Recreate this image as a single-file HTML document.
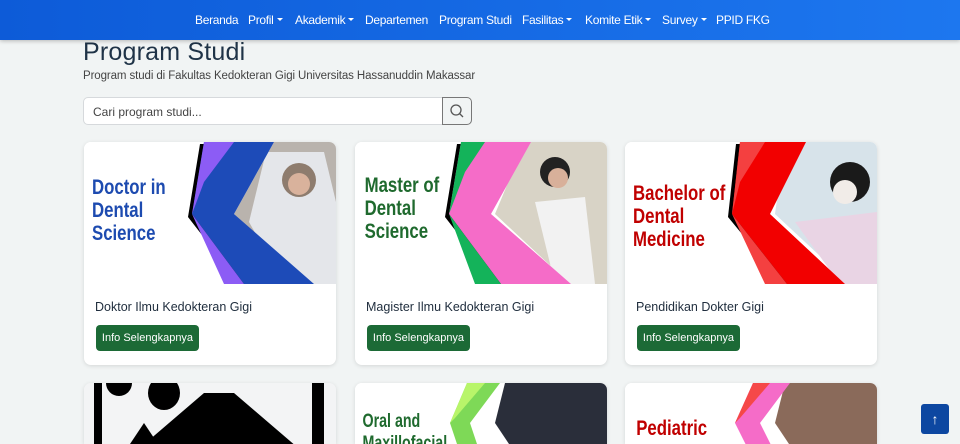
<!DOCTYPE html>
<html><head><meta charset="utf-8"><style>
*{box-sizing:border-box;margin:0;padding:0}
html{height:444px;overflow:hidden}
body{width:960px;height:444px;overflow:hidden;background:#f1f4f4;font-family:"Liberation Sans",sans-serif;position:relative}
.nav{position:absolute;top:0;left:0;width:960px;height:40px;background:linear-gradient(90deg,#0d5bd8,#1d77ef);box-shadow:0 1px 4px rgba(0,0,0,.25);z-index:2}
.nav span{position:absolute;top:13px;color:#fff;font-size:12px;letter-spacing:-.3px;white-space:nowrap}
.car{display:inline-block;width:0;height:0;border-left:3px solid transparent;border-right:3px solid transparent;border-top:3px solid #fff;vertical-align:3px;margin-left:3px}
h1{position:absolute;left:83px;top:38px;font-size:25px;font-weight:normal;color:#1f3347;letter-spacing:.2px}
.sub{position:absolute;left:83px;top:70px;font-size:11.5px;color:#444;letter-spacing:-.1px}
.search{position:absolute;left:83px;top:97px;width:360px;height:28px;background:#fff;border:1px solid #d6d9dc;border-radius:5px 0 0 5px;font-size:12px;color:#444;padding:7px 9px}
.sbtn{position:absolute;left:442px;top:97px;width:30px;height:28px;border:1px solid #777;border-radius:0 5px 5px 0}
.card{position:absolute;width:252px;height:223px;background:#fff;border-radius:7px;box-shadow:0 1px 4px rgba(0,0,0,.12);overflow:hidden}
.card.low{height:61px;border-radius:7px 7px 0 0}
.card svg{position:absolute;left:0;top:0}
.card .t{position:absolute;left:11px;top:158px;font-size:12.5px;color:#1f2d3d}
.card .b{position:absolute;left:12px;top:183px;width:103px;height:26px;background:#1c6a36;border-radius:4px;color:#fff;font-size:11px;text-align:center;line-height:26px}
.up{position:absolute;left:921px;top:404px;width:28px;height:30px;background:#0d47a1;border-radius:3px;color:#fff;text-align:center;font-size:14px;line-height:30px}
</style></head><body>
<div class="nav">
<span style="left:195px">Beranda</span>
<span style="left:248px">Profil<i class="car"></i></span>
<span style="left:295px">Akademik<i class="car"></i></span>
<span style="left:365px">Departemen</span>
<span style="left:439px">Program Studi</span>
<span style="left:522px">Fasilitas<i class="car"></i></span>
<span style="left:585px">Komite Etik<i class="car"></i></span>
<span style="left:662px">Survey<i class="car"></i></span>
<span style="left:716px">PPID FKG</span>
</div>
<h1>Program Studi</h1>
<div class="sub">Program studi di Fakultas Kedokteran Gigi Universitas Hassanuddin Makassar</div>
<div class="search">Cari program studi...</div>
<div class="sbtn"><svg width="28" height="26" viewBox="0 0 28 26"><circle cx="13" cy="12" r="5" fill="none" stroke="#555" stroke-width="1.3"/><line x1="16.5" y1="15.5" x2="20" y2="19" stroke="#555" stroke-width="1.3"/></svg></div>

<div class="card" style="left:84px;top:142px">
<svg width="252" height="142"><rect width="252" height="142" fill="#fff"/>
<polygon points="190,0 252,0 252,142 228,142 150,72" fill="#b9b3ad"/>
<polygon points="182,10 240,10 252,60 252,142 200,142 165,80" fill="#e4e6ea"/>
<circle cx="215" cy="38" r="17" fill="#8e7c6e"/><circle cx="215" cy="42" r="11" fill="#d9b29c"/>
<polygon points="116,2 186,2 146,75 226,142 156,142 104,75" fill="#000"/>
<polygon points="120,0 190,0 150,72 230,142 160,142 108,72" fill="#1d4bb8"/>
<polygon points="120,0 150,0 120,40 108,72 160,142 140,142 108,72" fill="#8c5cf5"/>
<g font-family="Liberation Sans" font-weight="bold" font-size="21" fill="#1d4bb0" transform="scale(.8,1)">
<text x="10" y="52">Doctor in</text><text x="10" y="75">Dental</text><text x="10" y="98">Science</text></g>
</svg>
<div class="t">Doktor Ilmu Kedokteran Gigi</div><div class="b">Info Selengkapnya</div></div>

<div class="card" style="left:355px;top:142px">
<svg width="252" height="142"><rect width="252" height="142" fill="#fff"/>
<polygon points="170,0 252,0 252,142 215,142 140,72" fill="#d8d3c6"/>
<circle cx="200" cy="30" r="15" fill="#222"/><circle cx="203" cy="36" r="10" fill="#d8b09a"/>
<polygon points="180,60 230,55 240,142 200,142" fill="#f2f2f2"/>
<polygon points="102,2 172,2 132,75 212,142 142,142 90,75" fill="#000"/>
<polygon points="106,0 176,0 136,72 216,142 146,142 94,72" fill="#f56cc8"/>
<polygon points="106,0 130,0 110,30 94,72 146,142 120,142 94,72" fill="#14b35a"/>
<g font-family="Liberation Sans" font-weight="bold" font-size="21" fill="#1f6a2e" transform="scale(.8,1)">
<text x="12" y="50">Master of</text><text x="12" y="73">Dental</text><text x="12" y="96">Science</text></g>
</svg>
<div class="t">Magister Ilmu Kedokteran Gigi</div><div class="b">Info Selengkapnya</div></div>

<div class="card" style="left:625px;top:142px">
<svg width="252" height="142"><rect width="252" height="142" fill="#fff"/>
<polygon points="160,0 252,0 252,142 225,142 150,72" fill="#d7e3ea"/>
<circle cx="225" cy="40" r="20" fill="#1a1a1a"/><circle cx="220" cy="50" r="12" fill="#f1ece8"/>
<polygon points="170,80 252,70 252,142 215,142" fill="#e9d4e4"/>
<polygon points="111,2 177,2 141,75 216,142 158,142 103,75" fill="#000"/>
<polygon points="115,0 181,0 145,72 220,142 162,142 107,72" fill="#f20000"/>
<polygon points="115,0 140,0 115,40 107,72 162,142 140,142 107,72" fill="#f44040"/>
<g font-family="Liberation Sans" font-weight="bold" font-size="21" fill="#c00000" transform="scale(.8,1)">
<text x="10" y="58">Bachelor of</text><text x="10" y="81">Dental</text><text x="10" y="104">Medicine</text></g>
</svg>
<div class="t">Pendidikan Dokter Gigi</div><div class="b">Info Selengkapnya</div></div>

<div class="card low" style="left:84px;top:383px;background:#f3f4f5">
<svg width="252" height="61"><rect width="252" height="61" fill="#f3f4f5"/>
<rect x="10" y="0" width="8" height="61" fill="#000"/><rect x="228" y="0" width="12" height="61" fill="#000"/>
<path d="M22 0 h26 a13 13 0 0 1 -26 0z" fill="#000"/><ellipse cx="80" cy="10" rx="16" ry="17" fill="#000"/>
<polygon points="50,70 120,10 150,10 220,70" fill="#000"/><polygon points="40,70 60,40 80,70" fill="#000"/>
</svg></div>

<div class="card low" style="left:355px;top:383px">
<svg width="252" height="61"><rect width="252" height="61" fill="#fff"/>
<polygon points="150,0 252,0 252,70 160,70 140,40" fill="#2a2e3a"/>
<polygon points="112,0 145,0 115,40 125,70 105,70 95,40" fill="#7ed957"/>
<polygon points="112,0 130,0 100,35 95,40" fill="#b8f56a"/>
<g font-family="Liberation Sans" font-weight="bold" font-size="19" fill="#1f6a2e" transform="scale(.75,1)">
<text x="10" y="44">Oral and</text><text x="10" y="66">Maxillofacial</text></g>
</svg></div>

<div class="card low" style="left:625px;top:383px">
<svg width="252" height="61"><rect width="252" height="61" fill="#fff"/>
<polygon points="160,0 252,0 252,70 170,70 150,40" fill="#8a6a5a"/>
<polygon points="128,0 165,0 135,40 150,70 125,70 110,40" fill="#f56cc8"/>
<polygon points="128,0 145,0 115,35 110,40" fill="#f54848"/>
<g font-family="Liberation Sans" font-weight="bold" font-size="21" fill="#c00000" transform="scale(.8,1)">
<text x="14" y="52">Pediatric</text></g>
</svg></div>

<div class="up">↑</div>
</body></html>
